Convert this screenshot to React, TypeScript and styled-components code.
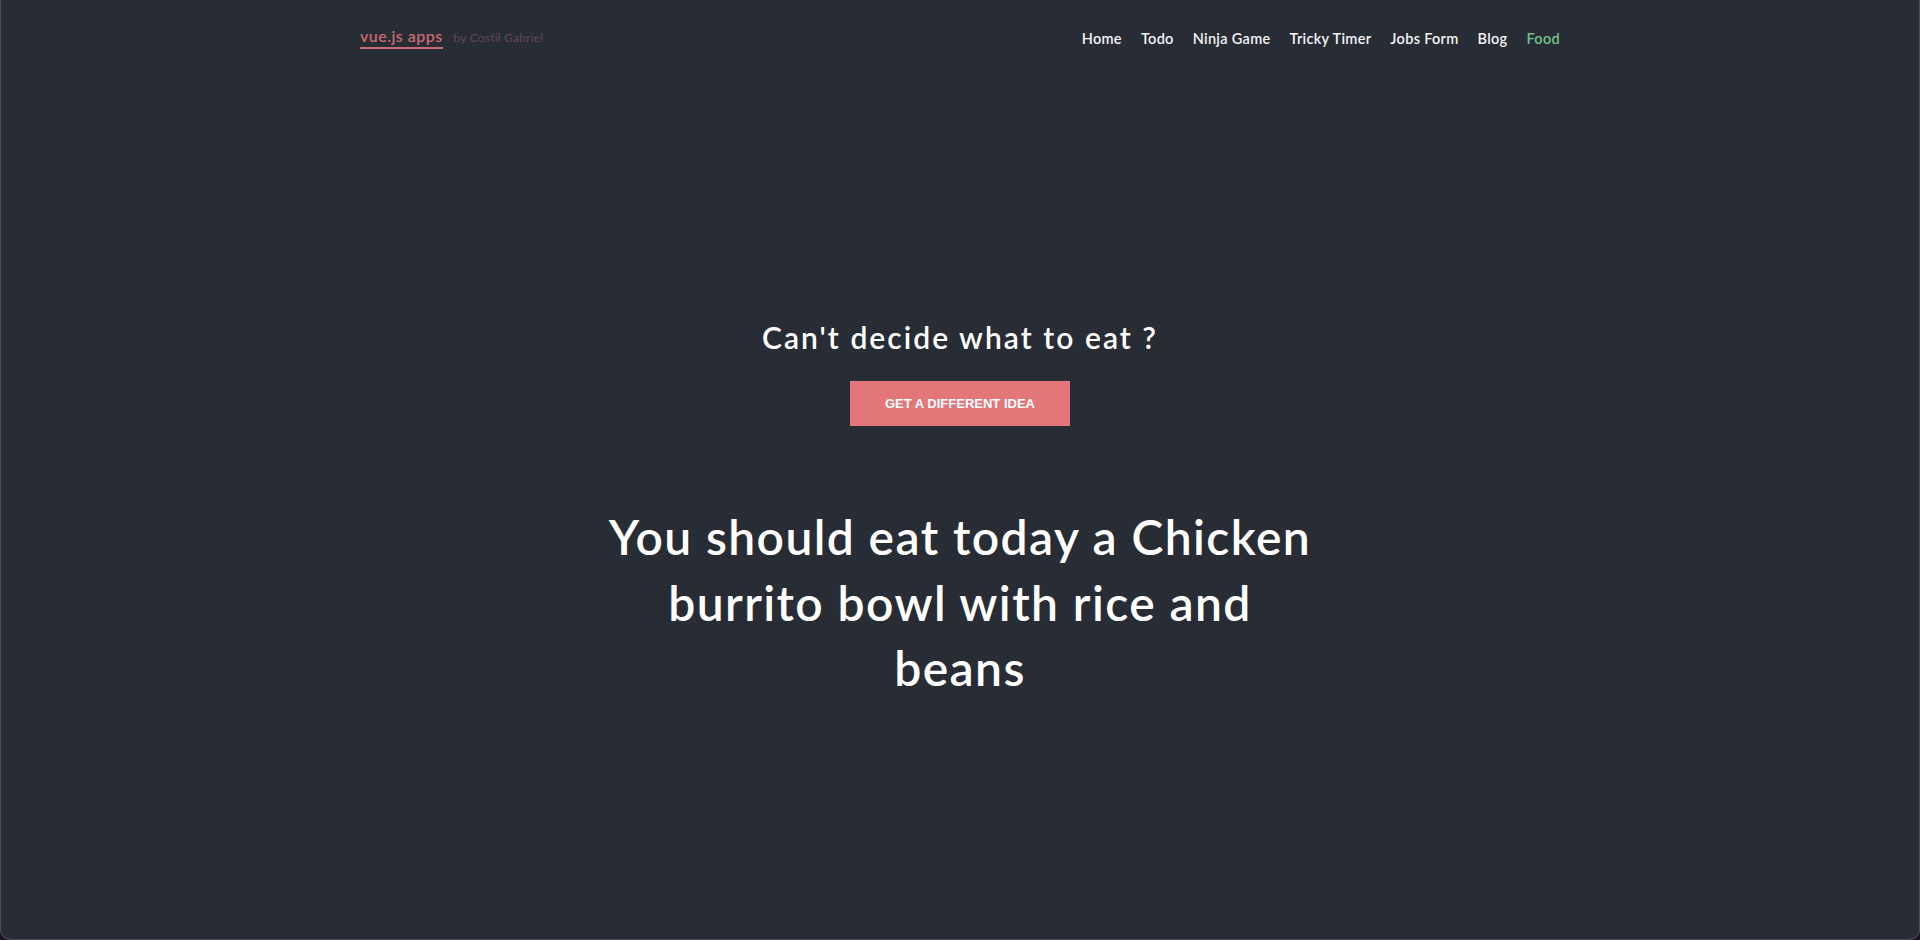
import React from "react";
import styled, { createGlobalStyle } from "styled-components";

const Global = createGlobalStyle`
  html, body { margin: 0; padding: 0; background: #1b1422; }
  * { box-sizing: border-box; }
`;

const Frame = styled.div`
  height: 940px;
  background: #282c35;
  border: 1px solid #4a4e58;
  border-top: none;
  border-radius: 0 0 11px 11px;
  overflow: hidden;
  font-family: Lato, "Open Sans", sans-serif;
  color: #fff;
`;

const Header = styled.header`
  max-width: 1200px;
  margin: 0 auto;
  height: 77px;
  display: flex;
  align-items: center;
  justify-content: space-between;
`;

const Brand = styled.div`
  display: flex;
  align-items: baseline;
  gap: 11px;
  padding-bottom: 2px;
`;

const Logo = styled.a`
  color: #c96b72;
  font-size: 16px;
  font-weight: 600;
  letter-spacing: 0.45px;
  text-decoration: none;
  padding-bottom: 2px;
  border-bottom: 2px solid #c96b72;
`;

const Byline = styled.span`
  color: #634652;
  font-size: 12px;
  letter-spacing: 0.2px;
`;

const Nav = styled.nav`
  display: flex;
  gap: 19px;
`;

const NavLink = styled.a<{ $active?: boolean }>`
  color: ${(p) => (p.$active ? "#73c08f" : "#f2f2f2")};
  font-size: 14.5px;
  font-weight: 600;
  letter-spacing: 0.3px;
  text-decoration: none;
`;

const Main = styled.main`
  display: flex;
  flex-direction: column;
  align-items: center;
  padding-top: 242px;
`;

const Question = styled.h2`
  margin: 0;
  font-size: 30px;
  line-height: 36px;
  font-weight: 600;
  letter-spacing: 2.05px;
`;

const Button = styled.button`
  margin-top: 26px;
  width: 220px;
  height: 45px;
  border: none;
  background: #e27679;
  color: #fff;
  font-family: "Liberation Sans", Arial, sans-serif;
  font-weight: 700;
  font-size: 13px;
  text-transform: uppercase;
  cursor: pointer;
`;

const Idea = styled.h1`
  margin: 78px 0 0;
  max-width: 716px;
  text-align: center;
  font-size: 48px;
  line-height: 65.5px;
  font-weight: 600;
  letter-spacing: 1.4px;
`;

const links = ["Home", "Todo", "Ninja Game", "Tricky Timer", "Jobs Form", "Blog", "Food"];

export default function App() {
  return (
    <>
      <Global />
      <Frame>
        <Header>
          <Brand>
            <Logo href="#">vue.js apps</Logo>
            <Byline>by Costil Gabriel</Byline>
          </Brand>
          <Nav>
            {links.map((l) => (
              <NavLink key={l} href="#" $active={l === "Food"}>
                {l}
              </NavLink>
            ))}
          </Nav>
        </Header>
        <Main>
          <Question>Can't decide what to eat ?</Question>
          <Button>Get a different idea</Button>
          <Idea>You should eat today a Chicken burrito bowl with rice and beans</Idea>
        </Main>
      </Frame>
    </>
  );
}
